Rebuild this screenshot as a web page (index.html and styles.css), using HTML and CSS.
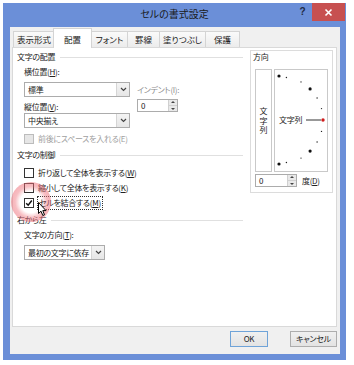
FILE: index.html
```html
<!DOCTYPE html>
<html lang="ja">
<head>
<meta charset="utf-8">
<title>セルの書式設定</title>
<link rel="stylesheet" href="styles.css">
</head>
<body>
<div class="window">
  <div class="titlebar">
    <div class="title">セルの書式設定</div>
    <div class="controls">
      <div class="help">?</div>
      <div class="close">
        <svg width="9" height="9" viewBox="0 0 9 9"><path d="M1.5 1.5 L7.5 7.5 M7.5 1.5 L1.5 7.5" stroke="#fff" stroke-width="1.6"/></svg>
      </div>
    </div>
  </div>
  <div class="client">
    <div class="tabs">
      <div class="tab t1">表示形式</div>
      <div class="tab t2 active">配置</div>
      <div class="tab t3">フォント</div>
      <div class="tab t4">罫線</div>
      <div class="tab t5">塗りつぶし</div>
      <div class="tab t6">保護</div>
    </div>
    <div class="panel">
      <div class="left">
        <div class="ghead">文字の配置</div>
        <div class="align-grid">
          <div class="lbl h-lbl">横位置(<u>H</u>):</div>
          <div class="select h-sel"><span class="val">標準</span><span class="arrow"><svg width="7" height="5" viewBox="0 0 7 5"><path d="M1 1 L3.5 3.5 L6 1" fill="none" stroke="#444" stroke-width="1.2"/></svg></span></div>
          <div class="lbl gray indent-lbl">インデント(I):</div>
          <div class="lbl v-lbl">縦位置(<u>V</u>):</div>
          <div class="spin indent-spin"><span class="sv">0</span><span class="sbtn"><span class="up"></span><span class="down"></span></span></div>
          <div class="select v-sel"><span class="val">中央揃え</span><span class="arrow"><svg width="7" height="5" viewBox="0 0 7 5"><path d="M1 1 L3.5 3.5 L6 1" fill="none" stroke="#444" stroke-width="1.2"/></svg></span></div>
        </div>
        <div class="cb disabled first-cb"><span class="box"></span><span>前後にスペースを入れる(E)</span></div>
        <div class="ghead g2">文字の制御</div>
        <div class="cb cb1"><span class="box"></span><span>折り返して全体を表示する(<u>W</u>)</span></div>
        <div class="cb cb2"><span class="box"></span><span>縮小して全体を表示する(<u>K</u>)</span></div>
        <div class="cb cb2"><span class="box"><svg width="8" height="8" viewBox="0 0 8 8"><path d="M1.2 4.2 L3.2 6.2 L6.8 1.5" fill="none" stroke="#111" stroke-width="1.5"/></svg></span><span class="focus">セルを結合する(<u>M</u>)</span></div>
        <div class="ghead g3">右から左</div>
        <div class="lbl dir-lbl">文字の方向(<u>T</u>):</div>
        <div class="select dir-sel"><span class="val">最初の文字に依存</span><span class="arrow"><svg width="7" height="5" viewBox="0 0 7 5"><path d="M1 1 L3.5 3.5 L6 1" fill="none" stroke="#444" stroke-width="1.2"/></svg></span></div>
      </div>
      <div class="right">
        <div class="orient">
          <div class="olabel">方向</div>
          <div class="obox">
            <div class="vtext"><span>文</span><span>字</span><span>列</span></div>
            <div class="dial">
              <svg width="52" height="101" viewBox="0 0 52 101">
                <circle cx="4" cy="6" r="1.6" fill="#111"/>
                <circle cx="11.4" cy="7.5" r="0.7" fill="#222"/>
                <circle cx="26" cy="11.9" r="0.7" fill="#222"/>
                <circle cx="35.1" cy="18.9" r="1.6" fill="#111"/>
                <circle cx="42.1" cy="28" r="0.7" fill="#222"/>
                <circle cx="46.5" cy="38.6" r="0.7" fill="#222"/>
                <circle cx="48" cy="50" r="1.7" fill="#d01c1c"/>
                <circle cx="46.5" cy="61.4" r="0.7" fill="#222"/>
                <circle cx="42.1" cy="72" r="0.7" fill="#222"/>
                <circle cx="35.1" cy="81.1" r="1.6" fill="#111"/>
                <circle cx="26" cy="88.1" r="0.7" fill="#222"/>
                <circle cx="11.4" cy="92.5" r="0.7" fill="#222"/>
                <circle cx="4" cy="94" r="1.6" fill="#111"/>
                <text x="4" y="53" class="dialtext">文字列</text>
                <line x1="31" y1="50" x2="46" y2="50" stroke="#333" stroke-width="1"/>
              </svg>
            </div>
          </div>
          <div class="degree">
            <div class="spin deg-spin"><span class="sv">0</span><span class="sbtn"><span class="up"></span><span class="down"></span></span></div>
            <span class="deg-lbl">度(<u>D</u>)</span>
          </div>
        </div>
      </div>
    </div>
    <div class="buttons">
      <div class="btn ok">OK</div>
      <div class="btn cancel">キャンセル</div>
    </div>
  </div>
</div>
<div class="highlight"></div>
<svg class="cursor" width="10" height="15" viewBox="0 0 10 15"><path d="M0.5 0.5 L0.5 11.5 L3 9.2 L4.8 13.5 L6.5 12.8 L4.8 8.6 L8 8.6 Z" fill="#fff" stroke="#000" stroke-width="1" stroke-linejoin="round"/></svg>
</body>
</html>
```
FILE: styles.css
```css
* { box-sizing: border-box; }
body {
  margin: 0;
  background: #ffffff;
  font-family: "Noto Sans CJK JP", "Noto Sans", sans-serif;
  font-size: 8px;
  letter-spacing: -0.3px;
  color: #222;
  font-feature-settings: "palt";
  position: relative;
  width: 354px;
  height: 365px;
  overflow: hidden;
}
u { text-decoration: underline; text-underline-offset: 1px; }

.window {
  margin: 3px 0 0 3px;
  width: 343px;
  height: 357px;
  background: #6b8fd8;
  display: flex;
  flex-direction: column;
}
.titlebar {
  height: 24px;
  display: grid;
  grid-template-columns: 1fr auto 1fr;
  align-items: start;
}
.title {
  grid-column: 2;
  font-size: 10px;
  letter-spacing: 0;
  line-height: 22px;
  color: #1a1a1a;
}
.controls {
  grid-column: 3;
  justify-self: end;
  display: flex;
  margin-right: 1px;
}
.help {
  width: 19px;
  height: 18px;
  font: bold 10px "Liberation Sans", sans-serif;
  line-height: 18px;
  text-align: center;
  color: #1f2a44;
}
.close {
  width: 33px;
  height: 18px;
  background: #c75050;
  display: flex;
  align-items: center;
  justify-content: center;
}

.client {
  flex: 1;
  margin: 0 6px 6px 7px;
  background: #f0f0f0;
  display: flex;
  flex-direction: column;
}
.tabs {
  display: flex;
  align-items: flex-end;
  height: 21px;
  margin-left: 3px;
  margin-bottom: -1px;
  position: relative;
  z-index: 1;
}
.tab {
  height: 16px;
  margin-bottom: 1px;
  border: 1px solid #d4d4d4;
  border-bottom: none;
  background: linear-gradient(#fafafa, #ececec);
  text-align: center;
  font-size: 8.5px;
  letter-spacing: 0;
  line-height: 15px;
  margin-right: -1px;
  white-space: nowrap;
}
.tab.active {
  height: 20px;
  margin-bottom: 0;
  background: #fff;
  padding-top: 3px;
  line-height: 15px;
  margin-left: -1px;
}
.t1 { width: 42px; }
.t2 { width: 39px; }
.t3 { width: 37px; }
.t4 { width: 33px; }
.t5 { width: 47px; }
.t6 { width: 35px; }

.panel {
  height: 280px;
  width: 325px;
  margin-left: 2px;
  background: #fff;
  border: 1px solid #d9d9d9;
  display: grid;
  grid-template-columns: 226px 83px;
  column-gap: 7px;
  padding-left: 4px;
  align-items: start;
}

.ghead {
  display: flex;
  align-items: center;
  line-height: 12px;
  margin-top: 3px;
  white-space: nowrap;
}
.ghead::after {
  content: "";
  flex: 1;
  border-top: 1px solid #e0e0e0;
  margin-left: 5px;
}
.g2 { margin-top: 4px; }
.g3 { margin-top: 5px; }

.lbl { line-height: 12px; white-space: nowrap; }
.gray { color: #8d8d8d; }

.align-grid {
  margin: 3px 0 0 7px;
  display: grid;
  grid-template-columns: 106px 41px;
  grid-template-rows: 16px 16px 15px 15px;
  column-gap: 7px;
}
.h-lbl { grid-column: 1; grid-row: 1; align-self: start; }
.h-sel { grid-column: 1; grid-row: 2; align-self: start; }
.indent-lbl { grid-column: 2; grid-row: 2; align-self: center; }
.v-lbl { grid-column: 1; grid-row: 3; align-self: end; }
.indent-spin { grid-column: 2; grid-row: 3; align-self: start; margin-top: 1px; }
.v-sel { grid-column: 1; grid-row: 4; align-self: start; }

.select {
  height: 15px;
  border: 1px solid #acacac;
  background: #fff;
  display: flex;
}
.select .val {
  flex: 1;
  padding-left: 3px;
  line-height: 13px;
  white-space: nowrap;
  overflow: hidden;
}
.select .arrow {
  width: 13px;
  flex: none;
  border-left: 1px solid #d5d5d5;
  background: linear-gradient(#f4f4f4, #e6e6e6);
  display: flex;
  align-items: center;
  justify-content: center;
}
.dir-lbl { margin: 3px 0 0 7px; }
.dir-sel { margin: 4px 0 0 7px; width: 81px; }

.spin {
  height: 13px;
  border: 1px solid #acacac;
  background: #fff;
  display: flex;
}
.spin .sv { flex: 1; padding-left: 3px; line-height: 11px; }
.spin .sbtn {
  width: 9px;
  display: flex;
  flex-direction: column;
  background: #e9e9e9;
  border-left: 1px solid #d0d0d0;
}
.sbtn .up, .sbtn .down {
  flex: 1;
  position: relative;
}
.sbtn .up { border-bottom: 1px solid #d0d0d0; }
.sbtn .up::after, .sbtn .down::after {
  content: "";
  position: absolute;
  left: 2px;
  border-left: 2px solid transparent;
  border-right: 2px solid transparent;
}
.sbtn .up::after { top: 1px; border-bottom: 2px solid #444; }
.sbtn .down::after { top: 2px; border-top: 2px solid #444; }
.indent-spin { width: 41px; }
.deg-spin { width: 42px; }

.cb {
  display: flex;
  align-items: center;
  gap: 4px;
  line-height: 12px;
  height: 12px;
  margin-left: 7px;
  white-space: nowrap;
}
.cb .box {
  width: 10px;
  height: 10px;
  flex: none;
  border: 1px solid #333;
  background: #fff;
  display: flex;
  align-items: center;
  justify-content: center;
}
.cb.disabled { color: #a0a0a0; }
.cb.disabled .box { border-color: #bcbcbc; background: #e6e6e6; }
.first-cb { margin-top: 5px; }
.cb1 { margin-top: 6px; }
.cb2 { margin-top: 3px; }
.focus { outline: 1px dotted #333; outline-offset: 0; padding: 0 1px; }

.orient {
  margin-top: 2px;
  height: 143px;
  border: 1px solid #dcdcdc;
  padding-left: 4px;
}
.olabel { line-height: 12px; margin-left: -2px; }
.obox {
  margin-top: 6px;
  height: 103px;
  display: flex;
  gap: 2px;
}
.vtext {
  width: 17px;
  border: 1px solid #c9c9c9;
  display: flex;
  flex-direction: column;
  align-items: center;
  justify-content: center;
  font-size: 8px;
  letter-spacing: 0;
  line-height: 9.5px;
}
.dial {
  width: 54px;
  border: 1px solid #c9c9c9;
}
.dial svg { display: block; }
.dialtext { font-size: 8px; fill: #222; font-family: "Noto Sans CJK JP", sans-serif; }
.degree {
  margin-top: 2px;
  display: flex;
  align-items: center;
  gap: 5px;
}
.deg-lbl { line-height: 12px; white-space: nowrap; }

.buttons {
  display: flex;
  justify-content: flex-end;
  gap: 22px;
  padding-right: 3px;
  margin-top: 4px;
}
.btn {
  height: 16px;
  border: 1px solid #adadad;
  background: linear-gradient(#f0f0f0, #e3e3e3);
  text-align: center;
  line-height: 14px;
  white-space: nowrap;
}
.ok { width: 38px; border-color: #6fa3d8; }
.cancel { width: 47px; }

.highlight {
  position: absolute;
  left: 11px;
  top: 182px;
  width: 40px;
  height: 40px;
  border-radius: 50%;
  background: radial-gradient(circle, rgba(255,255,255,0) 38%, rgba(238,110,120,0.45) 56%, rgba(238,110,120,0.55) 74%, rgba(238,110,120,0) 100%);
  pointer-events: none;
}
.cursor {
  position: absolute;
  left: 38px;
  top: 202px;
}
```
